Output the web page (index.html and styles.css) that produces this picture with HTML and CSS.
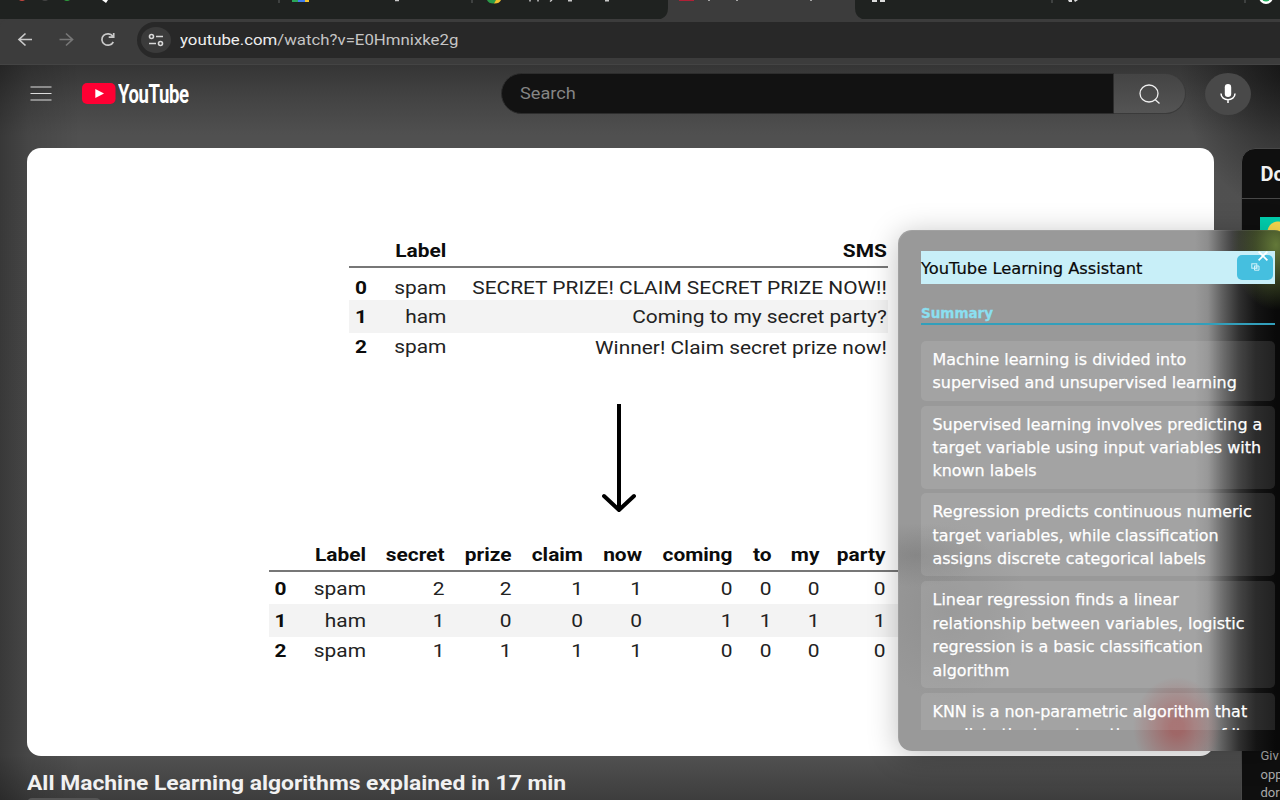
FILE: index.html
```html
<!DOCTYPE html>
<html lang="en">
<head>
<meta charset="utf-8">
<title>All Machine Learning algorithms explained in 17 min</title>
<link rel="stylesheet" href="styles.css">
</head>
<body>
<div class="tabs">
  <svg width="1280" height="20" viewBox="0 0 1280 20">
    <path fill="#3c3c3c" d="M656 20q12-1 12-12V0h187v8q0 11 12 12z"/>
    <circle cx="22" cy="-4" r="5" fill="#c5473f"/><circle cx="45" cy="-4" r="5" fill="#444"/><circle cx="67" cy="-4" r="5" fill="#2c9c3c"/>
    <path fill="#fff" d="M102 0h6l-2 3z"/>
    <path stroke="#4a4c4b" stroke-width="1.5" d="M279 0v3M472 0v3M1052 0v3M1245 0v3"/>
    <path fill="#2aa65a" d="M292 0h6v2h-6z"/><path fill="#3f7ef0" d="M298 0h7v2h-7z"/><path fill="#f4c430" d="M305 0h4v2h-4z"/>
    <path fill="#2a9b48" d="M487 0a7 5 0 0 0 7 3.500l3-3.500z"/><path fill="#f2c230" d="M494 3.500A7 5 0 0 0 501 0h-5z"/>
    <path fill="#b02036" d="M679 0h15v1h-15z"/>
    <path stroke="#c8c8c8" stroke-width="1.500" d="M395 .5h4M530 0v1.500M538 0v1.500M552 0l-2 1.500M568 .7h4M605 .7h4M709 0v1M737 0v1M811 0v1"/>
    <path fill="#ddd" d="M872 0h5v2h-5zM880 0h5v2h-5zM1068 0h4v2h-3zM1074 0h4l-3 2z"/>
    <circle cx="1266" cy="-3" r="7" fill="#fff"/><circle cx="1266" cy="-3" r="4.500" fill="#22b060"/>
  </svg>
</div>
<div class="toolbar">
  <svg class="nav" width="136" height="44" viewBox="0 0 136 44" fill="none" stroke-width="1.700">
    <path stroke="#c9c9c9" d="M32 20.500H19.500M25.500 14.500l-6.500 6 6.500 6"/>
    <path stroke="#777" d="M59.500 20.500H72M66 14.500l6.500 6-6.500 6"/>
    <path stroke="#c9c9c9" d="M112.800 17.200a6 5.700 0 1 0 .5 5.800M113.700 14v4.200h-5"/>
  </svg>
  <div class="omnibox">
    <span class="site">
      <svg width="16" height="14" viewBox="0 0 16 14" fill="none" stroke="#d8d8d8" stroke-width="1.600"><circle cx="3.500" cy="3.500" r="2"/><path d="M8 3.500h7M1 10.500h7"/><circle cx="12.500" cy="10.500" r="2"/></svg>
    </span>
    <span class="url"><b>youtube.com</b>/watch?v=E0Hmnixke2g</span>
  </div>
</div>
<div class="page">
  <header class="masthead">
    <svg class="burger" width="22" height="16" viewBox="0 0 22 16" stroke="#ddd" stroke-width="1.200"><path d="M.5 1h21M.5 7.500h21M.5 14h21"/></svg>
    <svg class="play" width="34" height="21" viewBox="0 0 34 21"><rect width="33.500" height="21" rx="5" fill="#ff0033"/><path fill="#fff" d="M13.300 6l8.700 4.500-8.700 4.500z"/></svg>
    <span class="brand">YouTube</span>
    <div class="search"><span class="hint">Search</span></div>
    <div class="go"><svg width="24" height="22" viewBox="0 0 24 22" fill="none" stroke="#eee" stroke-width="1.300"><ellipse cx="11" cy="10.500" rx="9" ry="8.500"/><path d="M17 16.500l4.500 4"/></svg></div>
    <div class="mic"><svg width="18" height="22" viewBox="0 0 18 22"><rect x="5.800" y="1" width="6.400" height="13" rx="3.200" fill="#fff"/><path fill="none" stroke="#fff" stroke-width="1.500" d="M2 10.500c0 8.300 14 8.300 14 0M9 16.500v3.500"/></svg></div>
  </header>
  <main class="content">
    <section class="primary">
      <div class="player">
        <div class="grid sms">
          <div class="row head"><span></span><span>Label</span><span>SMS</span></div>
          <div class="row"><b>0</b><span>spam</span><span>SECRET PRIZE! CLAIM SECRET PRIZE NOW!!</span></div>
          <div class="row alt"><b>1</b><span>ham</span><span>Coming to my secret party?</span></div>
          <div class="row"><b>2</b><span>spam</span><span class="low">Winner! Claim secret prize now!</span></div>
        </div>
        <svg class="arrow" width="36" height="112" viewBox="0 0 36 112" fill="none" stroke="#000" stroke-width="4"><path d="M18 1v107"/><path stroke-linecap="round" stroke-linejoin="round" d="M3 93l15 14 15-14"/></svg>
        <div class="grid counts">
          <div class="row head"><span></span><span>Label</span><span>secret</span><span>prize</span><span>claim</span><span>now</span><span>coming</span><span>to</span><span>my</span><span>party</span></div>
          <div class="row"><b>0</b><span>spam</span><span>2</span><span>2</span><span>1</span><span>1</span><span>0</span><span>0</span><span>0</span><span>0</span></div>
          <div class="row alt"><b>1</b><span>ham</span><span>1</span><span>0</span><span>0</span><span>0</span><span>1</span><span>1</span><span>1</span><span>1</span></div>
          <div class="row"><b>2</b><span>spam</span><span>1</span><span>1</span><span>1</span><span>1</span><span>0</span><span>0</span><span>0</span><span>0</span></div>
        </div>
      </div>
      <h1 class="title">All Machine Learning algorithms explained in 17 min</h1>
      <div class="avatar"></div>
    </section>
    <aside class="side">
      <div class="side-head">Do</div>
      <div class="thumb"></div>
      <p class="donate">Giv<br>opp<br>dor</p>
    </aside>
  </main>
</div>
<div class="panel">
  <div class="panel-head"><span class="name">YouTube Learning Assistant</span>
    <span class="copy"><svg width="9" height="8" viewBox="0 0 9 8" fill="none" stroke="#d4f2fa" stroke-width="1"><rect x=".8" y=".8" width="5" height="4.400"/><path d="M3 3h5v4.200H3.500V3M4.500 5h2"/></svg></span>
    <svg class="close" width="10" height="10" viewBox="0 0 10 10" stroke="#fff" stroke-width="1.700"><path d="M.6.6l8.800 8.800M9.400.6L.6 9.400"/></svg>
  </div>
  <h2 class="sum"><span>Summary</span></h2>
  <div class="list">
    <p>Machine learning is divided into<br>supervised and unsupervised learning</p>
    <p>Supervised learning involves predicting a<br>target variable using input variables with<br>known labels</p>
    <p>Regression predicts continuous numeric<br>target variables, while classification<br>assigns discrete categorical labels</p>
    <p>Linear regression finds a linear<br>relationship between variables, logistic<br>regression is a basic classification<br>algorithm</p>
    <p>KNN is a non-parametric algorithm that<br>predicts the target as the average of its</p>
  </div>
</div>
</body>
</html>
```
FILE: styles.css
```css
* { box-sizing: border-box; }
body { margin: 0; width: 1280px; height: 800px; overflow: hidden; position: relative; background: #3c3c3c; font-family: Roboto, sans-serif; }
svg { display: block; flex: none; }
.tabs { height: 19px; background: #1f2220; overflow: hidden; }
.toolbar { height: 46px; display: flex; background: #3c3c3c; border-bottom: 1px solid #444; border-radius: 8px 0 0 0; }
.omnibox { flex: 1; height: 36px; margin: 3px 0 0 1px; padding-left: 4px; background: #282828; border-radius: 18px 0 0 18px; display: flex; align-items: center; }
.site { width: 30px; height: 26px; border-radius: 50%; background: #3b3b3b; display: flex; align-items: center; justify-content: center; }
.url { margin-left: 8.500px; font-size: 15px; color: #c5c5c5; white-space: nowrap; transform: scaleX(1.12); transform-origin: left; }
.url b { font-weight: 400; color: #eee; }
.page { height: 735px; overflow: hidden; background:
  radial-gradient(110px 150px at 1290px 0, rgba(10,10,10,.75), transparent),
  linear-gradient(to right, rgba(0,0,0,.3), rgba(0,0,0,.13) 28px, transparent 80px),
  linear-gradient(#353535, #424242 30px, #505050 70px, #515151 690px, #3d3d3d 735px); }
.masthead { height: 83px; padding: 8px 0 0 30px; display: flex; align-items: flex-start; }
.burger { margin-top: 13px; }
.play { margin: 10px 0 0 30px; }
.brand { width: 384px; margin-left: 2px; height: 41px; line-height: 44px; font-size: 25px; font-weight: 700; letter-spacing: -.5px; color: #fff; transform: scaleX(.74); transform-origin: left; }
.search { width: 613px; height: 41px; margin-left: -1px; background: #121212; border: 1px solid #2d2d2d; border-radius: 21px 0 0 21px; padding: 0 0 0 18px; line-height: 40px; font-size: 16.500px; color: #858585; }
.hint { display: inline-block; transform: scaleX(1.1); transform-origin: left; }
.go { width: 72px; height: 41px; border: 1px solid #3a3a3a; border-left: 0; border-radius: 0 22px 22px 0; background: linear-gradient(#444, #545454); display: flex; align-items: center; justify-content: center; }
.mic { width: 46px; height: 42px; margin-left: 18.500px; border-radius: 50%; background: #494949; display: flex; align-items: center; justify-content: center; }
.content { display: flex; padding-left: 27.400px; gap: 27.600px; }
.primary { width: 1186.500px; flex: none; }
.player { height: 608px; background: #fff; border-radius: 14px; overflow: hidden; padding-top: 85px; }
.grid { --k: 1.1; transform: scaleX(var(--k)); transform-origin: left; font-size: 19px; color: #222; }
.row { display: grid; white-space: nowrap; height: 30px; line-height: 30px; }
.row > * { display: flex; justify-content: flex-end; }
.row b, .head { font-weight: 700; color: #0c0c0c; }
.head { height: 35px; line-height: 35px; border-bottom: 2px solid #777; margin-bottom: 5px; }
.alt { background: #f3f3f3; }
.sms { width: calc(539px / var(--k)); margin-left: 321.600px; }
.sms .row { grid-template-columns: minmax(0, 18fr) minmax(0, 79.500fr) minmax(0, 441fr); padding-right: 1px; }
.sms .alt { height: 33px; line-height: 34px; margin: -3px 0 -1px; }
.low { padding-top: 1px; }
.arrow { margin: 41px 0 0 573.600px; }
.counts { width: calc(700px / var(--k)); margin: 22px 0 0 241.600px; }
.counts .row { grid-template-columns: 17.500fr 79.500fr 78.500fr 67fr 71.500fr 59fr 90.500fr 39fr 48fr 66fr 83.500fr; }
.counts .row > * { min-width: 0; }
.counts .head { margin-bottom: 2px; }
.counts .alt { height: 33px; line-height: 33px; margin: 0 0 -1px; }
.title { margin: 14px 0 0; font-size: 20.500px; line-height: 26px; font-weight: 700; color: #f1f1f1; white-space: nowrap; transform: scaleX(1.115); transform-origin: left; }
.avatar { width: 74px; height: 10px; margin-top: 2px; background: #555; border-radius: 5px 5px 0 0; }
.side { flex: none; width: 60px; height: 680px; background: #0f0f0f; border: 1px solid #484848; border-radius: 14px 0 0 0; }
.side-head { height: 50px; line-height: 50px; padding-left: 18px; border-bottom: 1px solid #484848; font-size: 20px; font-weight: 700; color: #f1f1f1; }
.thumb { width: 41px; height: 40px; margin: 18px 0 0 18px; background: radial-gradient(circle at 18px 15px, #f6d84e 10px, transparent 11px), #00cfae; }
.donate { margin: 490px 0 0 18px; font-size: 13px; line-height: 18.500px; color: #aaa; }
.panel { position: absolute; left: 898px; top: 230px; width: 390px; height: 521px; border-radius: 14px; padding: 21px 0 0 23px; font-family: "DejaVu Sans", sans-serif; box-shadow: 0 4px 30px rgba(0,0,0,.25), inset 1px 1px 0 rgba(255,255,255,.08);
  background:
  radial-gradient(45px 65px at 378px 15px, rgba(115,140,65,.85), transparent),
  radial-gradient(44px 50px at 279px 497px, rgba(160,94,94,.85) 15%, transparent),
  radial-gradient(75px 32px at 18px 325px, rgba(115,115,115,.45), transparent),
  radial-gradient(80px 90px at 50px 380px, rgba(120,120,120,.3), transparent),
  linear-gradient(to right, #999 297px, #8d8d8d 310px, #606060 324px, #303030 341px, #141414 358px, #090909 378px); }
.panel-head { position: relative; width: 354px; height: 32.500px; background: #c8eff8; display: flex; align-items: center; justify-content: space-between; padding-right: 2px; }
.name { font-size: 16.300px; color: #0a0a0a; white-space: nowrap; -webkit-text-stroke: .2px; padding-top: 2px; }
.copy { width: 36px; height: 25px; border-radius: 5px; background: #45bfdf; display: flex; align-items: center; justify-content: center; }
.close { position: absolute; right: 7px; top: 0; }
.sum { width: 354px; height: 25px; margin: 16.500px 0 0; font-size: 13.500px; line-height: 26px; font-weight: 700; color: #8bdff0; border-bottom: 2px solid #329fbb; -webkit-text-stroke: .3px; }
.list { width: 354px; height: 389px; margin-top: 16px; overflow: hidden; display: flex; flex-direction: column; gap: 4.900px; }
.list p { flex: none; margin: 0; padding: 7px 0 5.800px 11.500px; border-radius: 5px; background: rgba(255,255,255,.1); color: #fff; font-size: 15.950px; line-height: 23.400px; white-space: nowrap; -webkit-text-stroke: .25px; }
```
